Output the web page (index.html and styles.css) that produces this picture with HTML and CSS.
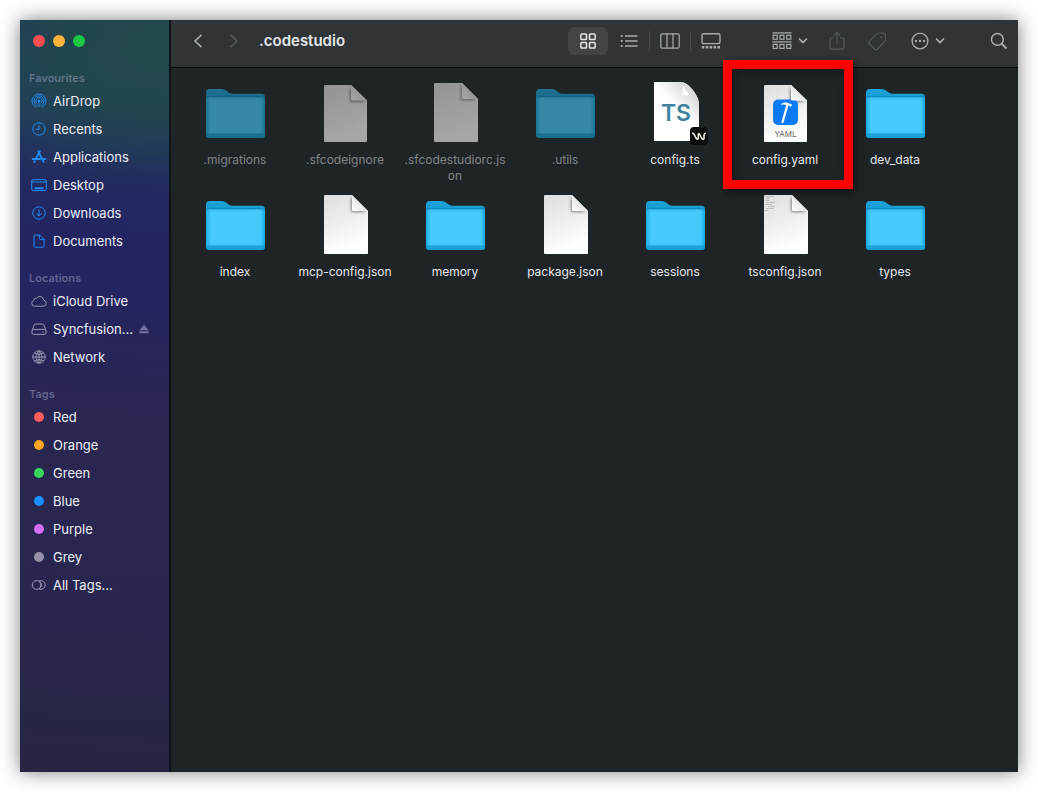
FILE: index.html
```html
<!DOCTYPE html>
<html lang="en-GB">
<head>
<meta charset="utf-8">
<title>.codestudio</title>
<meta name="viewport" content="width=device-width, initial-scale=1">
<link rel="stylesheet" href="styles.css">
</head>
<body>
<svg class="defs" width="0" height="0" aria-hidden="true">
  <defs>
    <linearGradient id="back" x1="0" y1="0" x2="0" y2="1"><stop offset="0" stop-color="#21a5db"/><stop offset=".35" stop-color="#088fc7"/><stop offset="1" stop-color="#0796cf"/></linearGradient>
    <linearGradient id="front" x1="0" y1="0" x2="0" y2="1"><stop offset="0" stop-color="#3fc3f6"/><stop offset=".1" stop-color="#47cbfd"/><stop offset=".86" stop-color="#46caff"/><stop offset=".89" stop-color="#2fb7ec"/><stop offset=".92" stop-color="#22a9e0"/><stop offset="1" stop-color="#0a9ad4"/></linearGradient>
    <linearGradient id="edge" x1="0" y1="0" x2="1" y2="0"><stop offset="0" stop-color="#0d9fd9" stop-opacity=".75"/><stop offset=".08" stop-color="#0d9fd9" stop-opacity="0"/><stop offset=".92" stop-color="#0d9fd9" stop-opacity="0"/><stop offset="1" stop-color="#0d9fd9" stop-opacity=".75"/></linearGradient>
    <linearGradient id="paper" x1="0" y1="0" x2=".3" y2="1"><stop offset="0" stop-color="#dedede"/><stop offset=".6" stop-color="#f1f1f1"/><stop offset="1" stop-color="#fff"/></linearGradient>
    <linearGradient id="curl" x1="0" y1="1" x2=".6" y2=".4"><stop offset="0" stop-color="#fff"/><stop offset="1" stop-color="#e2e2e2"/></linearGradient>
    <linearGradient id="tspaper" x1="1" y1="0" x2=".6" y2=".5"><stop offset="0" stop-color="#c4c4c4"/><stop offset="1" stop-color="#fff"/></linearGradient>
    <filter id="soft" x="-50%" y="-50%" width="200%" height="200%"><feGaussianBlur stdDeviation="1.4"/></filter>
    <symbol id="folder" viewBox="0 0 64 64">
      <path d="M3 13q0-4 4-4h12q2 0 4 1.500l3 2.200q1.500 1 3.500 1H58.500q3.500 0 3.500 3.500V54H3z" fill="url(#back)"/>
      <rect x="3" y="17" width="59" height="41" rx="3" fill="url(#front)"/>
      <rect x="3" y="17" width="59" height="41" rx="3" fill="url(#edge)"/>
      <path d="M4 54.500h57" stroke="#1492c4" stroke-width=".6"/>
      <path d="M4 17.600q1-.8 2-.8h53q1 0 2 .8" stroke="#0a83b6" stroke-width=".9" fill="none"/>
    </symbol>
    <symbol id="file" viewBox="0 0 64 64">
      <path d="M12 3h27l16 16v42q0 1-1 1H12q-1 0-1-1V4q0-1 1-1z" fill="url(#paper)"/>
      <path d="M38 5v15h15z" fill="#000" opacity=".45" filter="url(#soft)"/>
      <path d="M39 3v14.500q0 1.500 1.500 1.500H55z" fill="url(#curl)"/>
    </symbol>
    <symbol id="smallfile" viewBox="0 0 64 64">
      <path d="M12 5h26l16 15.500V61q0 1-1 1H12q-1 0-1-1V6q0-1 1-1z" fill="url(#paper)"/>
      <path d="M37 7v15h15z" fill="#000" opacity=".45" filter="url(#soft)"/>
      <path d="M38 5v14q0 1.500 1.500 1.500H54z" fill="url(#curl)"/>
    </symbol>
    <symbol id="down" viewBox="0 0 10 8"><path d="M1.500 2l3.500 3.600L8.500 2" fill="none" stroke="currentColor" stroke-width="1.700" stroke-linecap="round" stroke-linejoin="round"/></symbol>
  </defs>
</svg>
<div class="window">
  <aside class="sidebar">
    <div class="lights">
      <button class="light close" aria-label="Close"></button>
      <button class="light minimise" aria-label="Minimise"></button>
      <button class="light zoom" aria-label="Zoom"></button>
    </div>
    <nav class="places">
      <section>
        <h2>Favourites</h2>
        <a class="place accent" href="#"><svg viewBox="0 0 16 16"><path d="M5 14.300a7 7 0 1 1 6 0M5.700 12.200a5 5 0 1 1 4.600 0M6.500 10.400a3.100 3.100 0 1 1 3 0"/><path d="M8 7.500L5.800 14h4.400z" fill="currentColor" stroke="none" opacity=".45"/><circle cx="8" cy="8" r="1" fill="currentColor"/></svg><span>AirDrop</span></a>
        <a class="place accent" href="#"><svg viewBox="0 0 16 16"><circle cx="8" cy="8" r="6.200"/><path d="M8 4v4.300H4.800"/></svg><span>Recents</span></a>
        <a class="place accent" href="#"><svg viewBox="0 0 16 16"><g stroke-width="1.800" stroke-linecap="round"><path d="M8.900 2.300L4.800 9.600M7.200 2.300l5.500 10.600M1.600 10h7.600M11.900 10h2.500M3.800 12.300l-.5.8"/></g></svg><span>Applications</span></a>
        <a class="place accent" href="#"><svg viewBox="0 0 16 16"><rect x=".7" y="2.600" width="14.600" height="11" rx="1.500"/><path d="M.7 5h14.600"/><path d="M3.500 11.300h9" stroke-width="2"/></svg><span>Desktop</span></a>
        <a class="place accent" href="#"><svg viewBox="0 0 16 16"><circle cx="8" cy="8" r="6.200"/><path d="M8 4.600v6.200M5.600 8.500L8 10.900l2.400-2.400"/></svg><span>Downloads</span></a>
        <a class="place accent" href="#"><svg viewBox="0 0 16 16"><path d="M4.200 2h4.600l4.300 4.300v6.700q0 1.200-1.200 1.200H4.200q-1.200 0-1.200-1.200V3.200Q3 2 4.200 2zM8.500 2.200v3.200q0 1.200 1.200 1.200h3.200"/></svg><span>Documents</span></a>
      </section>
      <section>
        <h2>Locations</h2>
        <a class="place" href="#"><svg viewBox="0 0 16 16"><path d="M3.600 13.200a3.100 3.100 0 0 1-.8-6 2.300 2.300 0 0 1 2.700-2 4 4 0 0 1 7.300 1.900 3.100 3.100 0 0 1-.3 6.100z"/></svg><span>iCloud Drive</span></a>
        <a class="place" href="#"><svg viewBox="0 0 16 16"><path d="M1.200 9.300L3.200 4q.4-1 1.500-1h6.600q1.100 0 1.500 1l2 5.300"/><rect x="1" y="8.400" width="14" height="5" rx="1.500"/><path d="M11.500 11h1.300"/></svg><span>Syncfusion...</span><svg class="eject" viewBox="0 0 10 10"><path d="M5 .8l4.600 5.400H.4zM.4 7.200h9.200v2H.4z"/></svg></a>
        <a class="place" href="#"><svg viewBox="0 0 16 16"><circle cx="8" cy="8" r="6.200"/><path d="M8 1.800c-4 3.500-4 9 0 12.400M8 1.800c4 3.500 4 9 0 12.400M1.800 8h12.400M3.500 4q4.500 3 9 0M3.500 12q4.500-3 9 0M8 2v12"/></svg><span>Network</span></a>
      </section>
      <section>
        <h2>Tags</h2>
        <a class="place" href="#"><i class="dot red"></i><span>Red</span></a>
        <a class="place" href="#"><i class="dot orange"></i><span>Orange</span></a>
        <a class="place" href="#"><i class="dot green"></i><span>Green</span></a>
        <a class="place" href="#"><i class="dot blue"></i><span>Blue</span></a>
        <a class="place" href="#"><i class="dot purple"></i><span>Purple</span></a>
        <a class="place" href="#"><i class="dot grey"></i><span>Grey</span></a>
        <a class="place" href="#"><svg viewBox="0 0 16 16"><circle cx="5.700" cy="8" r="4.400"/><path d="M8.200 3.900a4.400 4.400 0 1 1 0 8.200M8.200 3.900a5 5 0 0 1 0 8.200"/></svg><span>All Tags...</span></a>
      </section>
    </nav>
  </aside>
  <div class="content">
    <header class="toolbar">
      <div class="history">
        <button class="tool" aria-label="Back"><svg width="12" height="16" viewBox="0 0 12 16"><path d="M9.500 1.800L3 8l6.500 6.200" stroke-width="1.600"/></svg></button>
        <button class="tool dim" aria-label="Forward" disabled><svg width="12" height="16" viewBox="0 0 12 16"><path d="M2.500 1.800L9 8l-6.500 6.200" stroke-width="1.600"/></svg></button>
      </div>
      <h1>.codestudio</h1>
      <div class="views">
        <button class="tool view selected" aria-label="Icons" aria-pressed="true"><svg width="16" height="16" viewBox="0 0 16 16"><g stroke-width="1.500"><rect x=".9" y=".9" width="5.600" height="5.600" rx=".8"/><rect x="9.500" y=".9" width="5.600" height="5.600" rx=".8"/><rect x=".9" y="9.500" width="5.600" height="5.600" rx=".8"/><rect x="9.500" y="9.500" width="5.600" height="5.600" rx=".8"/></g></svg></button>
        <button class="tool view" aria-label="List"><svg width="18" height="14" viewBox="0 0 18 14"><path d="M5 2h12.500M5 7h12.500M5 12h12.500" stroke-width="1.300"/><path d="M.8 2h1.800M.8 7h1.800M.8 12h1.800" stroke-width="1.800"/></svg></button>
        <button class="tool view ruled" aria-label="Columns"><svg width="20" height="16" viewBox="0 0 20 16"><rect x=".8" y=".8" width="18.400" height="14.400" rx="1.500"/><path d="M7 1v14M13 1v14"/></svg></button>
        <button class="tool view ruled" aria-label="Gallery"><svg width="20" height="16" viewBox="0 0 20 16"><rect x="1" y=".8" width="18" height="9.800" rx="1.500" stroke-width="1.400"/><path d="M.8 14.200h18.600" stroke-width="2.600" stroke-dasharray="2.600 1.300"/></svg></button>
      </div>
      <div class="actions">
        <button class="tool menu" aria-label="Group"><svg width="20" height="18" viewBox="0 0 20 18"><path d="M.5.800h19M.5 9.800h19"/><g><rect x="1.200" y="3.200" width="4" height="4"/><rect x="8" y="3.200" width="4" height="4"/><rect x="14.800" y="3.200" width="4" height="4"/><rect x="1.200" y="12.400" width="4" height="4"/><rect x="8" y="12.400" width="4" height="4"/><rect x="14.800" y="12.400" width="4" height="4"/></g></svg><svg width="10" height="8"><use href="#down"/></svg></button>
        <button class="tool dim" aria-label="Share" disabled><svg width="16" height="20" viewBox="0 0 16 20"><path d="M5 7H2.500Q1 7 1 8.500v8.200q0 1.500 1.500 1.500h11q1.500 0 1.500-1.500V8.500Q15 7 13.500 7H11M8 12.500V1.500M4.800 4.500L8 1.300l3.200 3.200"/></svg></button>
        <button class="tool dim" aria-label="Tags" disabled><svg width="20" height="20" viewBox="0 0 20 20"><path d="M11.400 2h5q2 0 2 2v4.800q0 1-.7 1.700l-7.600 7.700q-1.200 1.100-2.400 0l-5.500-5.500q-1.100-1.200 0-2.400l7.700-7.600q.6-.7 1.500-.7z"/><circle cx="14.200" cy="6.200" r="1" fill="currentColor" stroke="none"/></svg></button>
        <button class="tool menu more" aria-label="More"><svg width="18" height="18" viewBox="0 0 18 18"><circle cx="9" cy="9" r="7.900" stroke-width="1.400"/><g fill="currentColor" stroke="none"><circle cx="5" cy="9" r="1.200"/><circle cx="9" cy="9" r="1.200"/><circle cx="13" cy="9" r="1.200"/></g></svg><svg width="10" height="8"><use href="#down"/></svg></button>
        <button class="tool search" aria-label="Search"><svg width="18" height="18" viewBox="0 0 18 18"><circle cx="7.400" cy="7.400" r="5.900" stroke-width="1.500"/><path d="M11.800 11.800l4.700 4.700" stroke-width="2"/></svg></button>
      </div>
    </header>
    <main class="files">
      <div class="item hidden"><svg class="art"><use href="#folder"/></svg><span>.migrations</span></div>
      <div class="item hidden"><svg class="art"><use href="#smallfile"/></svg><span>.sfcodeignore</span></div>
      <div class="item hidden"><svg class="art"><use href="#file"/></svg><span>.sfcodestudiorc.json</span></div>
      <div class="item hidden"><svg class="art"><use href="#folder"/></svg><span>.utils</span></div>
      <div class="item"><svg class="art" viewBox="0 0 64 64"><path d="M11 2h27q6 1 11 7 6 7 7 13v39H11z" fill="url(#tspaper)"/><path d="M39 2q2 5 1 12 8-1 15 7-2-8-7-13-4-5-9-6z" fill="#dcdcdc"/><path d="M39.500 6q1 4 0 9.500 5-.5 8 .5z" fill="#fff"/><text class="ts" x="33" y="41" text-anchor="middle">TS</text><rect x="47" y="47" width="18" height="18" rx="4" fill="#0b0e0d"/><path d="M49 53.200q1.600 0 2.200 1.200l1.800 3.600q1.500 2 2.300.6v-4.400q.2-1 1-.3l2.400 4.300q1.500 2 2.300.4v-3.600q0-1.700 1.800-1.800" fill="none" stroke="#f5f3ea" stroke-width="1.500"/></svg><span>config.ts</span></div>
      <div class="item marked"><svg class="art" viewBox="0 0 64 64"><use href="#smallfile"/><rect x="20" y="19.500" width="25" height="25.500" rx="5" fill="#0a7bf5"/><path d="M38 5v14q0 1.500 1.500 1.500H54z" fill="url(#curl)"/><path d="M34.400 25l-4.800 17" stroke="#fff" stroke-width="2.300" stroke-linecap="round"/><path d="M27.500 24.800q1.800-2.600 5.500-2.600l3.500 1.200q1.300 1 2.500.7l-.6 2.500q-1.500 0-2.300-.9l-4-1q-2-.6-4.600.1z" fill="#fff"/><text class="kind" x="32.500" y="57" text-anchor="middle">YAML</text></svg><span>config.yaml</span></div>
      <div class="item"><svg class="art"><use href="#folder"/></svg><span>dev_data</span></div>
      <div class="item"><svg class="art"><use href="#folder"/></svg><span>index</span></div>
      <div class="item"><svg class="art"><use href="#file"/></svg><span>mcp-config.json</span></div>
      <div class="item"><svg class="art"><use href="#folder"/></svg><span>memory</span></div>
      <div class="item"><svg class="art"><use href="#file"/></svg><span>package.json</span></div>
      <div class="item"><svg class="art"><use href="#folder"/></svg><span>sessions</span></div>
      <div class="item"><svg class="art" viewBox="0 0 64 64"><use href="#file"/><path d="M12 4.500h9M13 6.500h3M13 8.500h4M13 10.500h9M13 12.500h7M15 14.500h7M13 16.500h8M12 18.500h4" stroke="#999" stroke-width=".6" stroke-dasharray="3 .6"/></svg><span>tsconfig.json</span></div>
      <div class="item"><svg class="art"><use href="#folder"/></svg><span>types</span></div>
    </main>
  </div>
</div>
</body>
</html>
```
FILE: styles.css
```css
* { box-sizing: border-box; }

body {
  margin: 0;
  padding: 20px;
  min-height: 100vh;
  display: flex;
  background: #fff;
  font-family: Inter, "Liberation Sans", sans-serif;
  font-size: 13px;
  color: #e6e8ea;
}

.defs { position: absolute; }

.window {
  flex: 1;
  display: flex;
  background: #1f2426;
  box-shadow: 0 0 18px rgba(0, 0, 0, .5);
}

/* Sidebar */
.sidebar {
  flex: 0 0 151px;
  padding: 14px 8px 20px 9px;
  border-right: 2px solid #101416;
  background:
    radial-gradient(ellipse 190px 130px at 90% 3%, #22474a 0%, rgba(34, 71, 74, .8) 50%, rgba(34, 71, 74, 0) 100%),
    linear-gradient(184deg, #203c5c 0, #20415a 8%, #213c5c 14%, #222b60 22%, #222561 28%, #25245e 38%, #2a264f 55%, #28264f 78%, #2a2649 85%, #262745 92%, #292544 100%);
}

.lights {
  display: flex;
  gap: 8px;
  height: 14px;
  padding-left: 4px;
  align-items: center;
}

.light {
  width: 12px;
  height: 12px;
  padding: 0;
  border: 0;
  border-radius: 50%;
}
.close { background: #ff4f50; }
.minimise { background: #ffb33c; }
.zoom { background: #1bc944; }

.places {
  display: flex;
  flex-direction: column;
  gap: 15px;
  margin-top: 22px;
}

.places h2 {
  margin: 0;
  font-size: 11px;
  line-height: 17px;
  font-weight: 600;
  color: rgba(160, 165, 200, .5);
}

.place {
  display: flex;
  align-items: center;
  gap: 6px;
  height: 28px;
  padding-left: 2px;
  color: #9a98b4;
  text-decoration: none;
}
.place span { color: #eceef6; white-space: nowrap; }
.place svg {
  flex: none;
  width: 16px;
  height: 16px;
  fill: none;
  stroke: currentColor;
  stroke-width: 1;
}
.place.accent { color: #1e8cf5; }
.place .eject {
  width: 10px;
  height: 10px;
  fill: #736fa3;
  stroke: none;
}

.dot {
  width: 10px;
  height: 10px;
  margin: 0 3px;
  border-radius: 50%;
}
.red { background: #ff5c5a; }
.orange { background: #fda422; }
.green { background: #35d75c; }
.blue { background: #1b8fff; }
.purple { background: #d56dfb; }
.grey { background: #9591a8; }

/* Toolbar */
.content {
  flex: 1;
  min-width: 0;
}

.toolbar {
  display: flex;
  align-items: center;
  height: 48px;
  padding: 0 5px 5px 9px;
  background: #303436;
  border-bottom: 1px solid #07090a;
}

.history { display: flex; }

.toolbar h1 {
  margin: 0 auto 0 7px;
  font-size: 15px;
  line-height: 20px;
  font-weight: 600;
}

.tool {
  display: flex;
  align-items: center;
  justify-content: center;
  width: 36px;
  height: 28px;
  padding: 0;
  border: 0;
  background: none;
  color: #a9acae;
}
.tool svg {
  flex: none;
  fill: none;
  stroke: currentColor;
  stroke-width: 1.2;
}
.tool.dim { color: #55595b; }

.views { display: flex; gap: 1px; margin-right: 34px; }
.view { position: relative; width: 40px; }
.selected {
  color: #e4e6e8;
  background: #414446;
  border-radius: 6px;
}
.ruled::before {
  content: "";
  position: absolute;
  left: -1px;
  top: 4px;
  width: 1px;
  height: 20px;
  background: #444849;
}

.actions { display: flex; gap: 4px; }
.menu { width: 50px; gap: 6px; }
.more { margin-left: 4px; }
.search { margin-left: 28px; width: 28px; }

/* File grid */
.files {
  display: grid;
  grid-template-columns: repeat(auto-fill, 110px);
  row-gap: 8px;
  padding: 12px 9px;
}

.item {
  position: relative;
  display: flex;
  flex-direction: column;
  align-items: center;
  gap: 8px;
  min-height: 104px;
}
.item span {
  width: 104px;
  font-size: 12px;
  line-height: 16px;
  text-align: center;
  word-break: break-all;
}
.art {
  width: 64px;
  height: 64px;
  overflow: visible;
}
.hidden .art { opacity: .6; }
.hidden span { color: #808486; }

.ts {
  font: 600 23px Inter, sans-serif;
  fill: #3d839d;
}
.kind {
  font: 400 8px Inter, sans-serif;
  fill: #666;
}

.marked::after {
  content: "";
  position: absolute;
  inset: -20px -13px -5px -7px;
  border: 9px solid #fe0000;
  box-shadow: 2px 3px 8px rgba(0, 0, 0, .5), inset 2px 3px 8px rgba(0, 0, 0, .35);
  pointer-events: none;
}
```
